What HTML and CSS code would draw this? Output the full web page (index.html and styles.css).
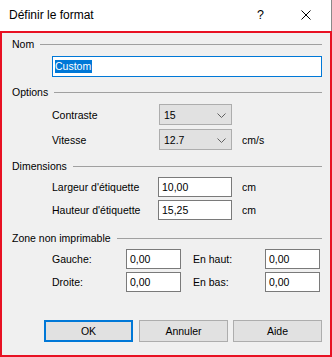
FILE: index.html
```html
<!DOCTYPE html>
<html lang="fr">
<head>
<meta charset="utf-8">
<title>Définir le format</title>
<link rel="stylesheet" href="styles.css">
</head>
<body>
<div class="window">
  <div class="titlebar">
    <span class="title">Définir le format</span>
    <span class="help">?</span>
    <svg class="close" width="10" height="10" viewBox="0 0 10 10"><path d="M0.5 0.5 L9.5 9.5 M9.5 0.5 L0.5 9.5" stroke="#000" stroke-width="1" fill="none"/></svg>
  </div>
  <div class="content">
    <div class="group-head h-nom"><span>Nom</span><i class="rule"></i></div>
    <div class="name-row"><div class="textbox focused name"><span class="sel">Custom</span></div></div>

    <div class="group-head h-options"><span>Options</span><i class="rule"></i></div>
    <div class="frow opt r-contraste">
      <span class="lbl">Contraste</span>
      <div class="combo"><span>15</span><svg class="chev" width="9" height="5" viewBox="0 0 9 5"><path d="M0.5 0.5 L4.5 4.5 L8.5 0.5" stroke="#606060" fill="none"/></svg></div>
    </div>
    <div class="frow opt r-vitesse">
      <span class="lbl">Vitesse</span>
      <div class="combo"><span>12.7</span><svg class="chev" width="9" height="5" viewBox="0 0 9 5"><path d="M0.5 0.5 L4.5 4.5 L8.5 0.5" stroke="#606060" fill="none"/></svg></div>
      <span class="unit">cm/s</span>
    </div>

    <div class="group-head h-dim"><span>Dimensions</span><i class="rule"></i></div>
    <div class="frow dim r-largeur">
      <span class="lbl">Largeur d'étiquette</span>
      <div class="textbox dimbox">10,00</div>
      <span class="unit">cm</span>
    </div>
    <div class="frow dim r-hauteur">
      <span class="lbl">Hauteur d'étiquette</span>
      <div class="textbox dimbox">15,25</div>
      <span class="unit">cm</span>
    </div>

    <div class="group-head h-zone"><span>Zone non imprimable</span><i class="rule"></i></div>
    <div class="frow zone r-gauche">
      <span class="lbl zl">Gauche:</span>
      <div class="textbox zbox">0,00</div>
      <span class="lbl zr">En haut:</span>
      <div class="textbox zbox">0,00</div>
    </div>
    <div class="frow zone r-droite">
      <span class="lbl zl">Droite:</span>
      <div class="textbox zbox">0,00</div>
      <span class="lbl zr">En bas:</span>
      <div class="textbox zbox">0,00</div>
    </div>

    <div class="buttons">
      <button class="btn default">OK</button>
      <button class="btn">Annuler</button>
      <button class="btn">Aide</button>
    </div>
  </div>
</div>
</body>
</html>
```

FILE: styles.css
```css
html, body {
  margin: 0;
  padding: 0;
  background: #ffffff;
}
body {
  width: 332px;
  height: 357px;
  overflow: hidden;
  font-family: "Liberation Sans", Arial, sans-serif;
  font-size: 10.5px;
  color: #000;
}
.window {
  width: 332px;
  height: 357px;
  display: flex;
  flex-direction: column;
}
.titlebar {
  height: 31px;
  box-sizing: border-box;
  display: flex;
  align-items: center;
  padding-left: 9px;
  background: #fff;
  border-right: 1px solid #8a8a8a;
  font-size: 12px;
}
.title {
  flex: 1;
  margin-top: -1px;
}
.help {
  font-size: 12.5px;
  margin-right: 37px;
  margin-top: -1px;
}
.close {
  margin-right: 20px;
  margin-top: -1px;
}
.content {
  flex: 1;
  box-sizing: border-box;
  border: 2px solid #e81123;
  background: #f0f0f0;
  padding: 4px 8px 0 10px;
  display: flex;
  flex-direction: column;
}
.group-head {
  height: 14px;
  display: flex;
  align-items: center;
}
.group-head .rule {
  flex: 1;
  height: 1px;
  background: #a0a0a0;
  margin-left: 6px;
}
.h-options { margin-top: 8px; }
.h-dim { margin-top: 9px; }
.h-zone { margin-top: 11px; }

.textbox {
  box-sizing: border-box;
  background: #fff;
  border: 1px solid #7a7a7a;
  display: flex;
  align-items: center;
  padding-left: 3px;
}
.focused {
  border-color: #0078d7;
}
.name-row {
  margin-top: 5px;
  padding-left: 40px;
}
.name {
  height: 21px;
  width: 270px;
  padding-left: 2px;
}
.sel {
  display: inline-block;
  background: #0078d7;
  color: #fff;
  line-height: 13px;
  height: 13px;
  padding: 0 1px 0 0;
}
.frow {
  display: flex;
  align-items: center;
  padding-left: 40px;
}
.lbl {
  flex: none;
}
.opt .lbl { width: 107px; }
.r-contraste { margin-top: 5px; }
.r-vitesse { margin-top: 4px; }
.combo {
  box-sizing: border-box;
  width: 73px;
  height: 21px;
  background: #e1e1e1;
  border: 1px solid #adadad;
  display: flex;
  align-items: center;
  justify-content: space-between;
  padding: 0 5px 0 4px;
}
.chev { margin-top: 1px; }
.unit {
  margin-left: 10px;
}
.dim .lbl { width: 106px; }
.dimbox {
  width: 74px;
  height: 20px;
}
.r-largeur { margin-top: 4px; }
.r-hauteur { margin-top: 3px; }

.zone .zl { width: 74px; }
.zone .zr { width: 72px; margin-left: 12px; }
.zbox {
  width: 55px;
  height: 20px;
}
.r-gauche { margin-top: 4px; }
.r-droite { margin-top: 3px; }

.buttons {
  display: flex;
  margin-top: 28px;
  padding-left: 32px;
}
.btn {
  box-sizing: border-box;
  width: 89px;
  height: 22px;
  margin: 0 0 0 6px;
  padding: 0;
  background: #e1e1e1;
  border: 1px solid #adadad;
  font-family: "Liberation Sans", Arial, sans-serif;
  font-size: 10.5px;
  color: #000;
}
.btn:first-child { margin-left: 0; }
.btn:last-child { margin-left: 5px; }
.btn.default {
  border: 2px solid #0078d7;
}
```
